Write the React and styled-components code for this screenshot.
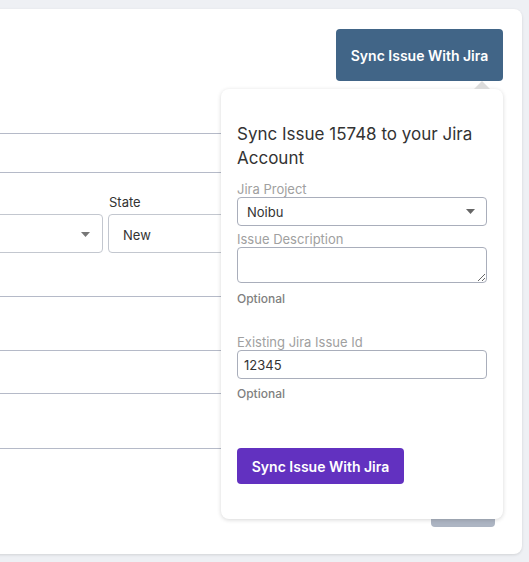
import React from "react";
import styled, { createGlobalStyle } from "styled-components";

const GlobalStyle = createGlobalStyle`
  html, body {
    margin: 0;
    padding: 0;
    background: #eef0f4;
    font-family: Inter, "Noto Sans", "Liberation Sans", sans-serif;
    overflow: hidden;
  }
  * { box-sizing: border-box; }
`;

const Page = styled.div`
  width: 529px;
  height: 562px;
  padding-top: 9px;
`;

const Card = styled.div`
  margin-left: -30px;
  width: 552px;
  height: 545px;
  background: #fff;
  border-radius: 8px;
  box-shadow: 0 1px 3px rgba(0, 0, 0, 0.12);
  display: flex;
  flex-direction: column;
  padding: 20px 19px 27px 0;
`;

const Header = styled.div`
  display: flex;
  justify-content: flex-end;
  height: 52px;
`;

const Anchor = styled.div`
  position: relative;
`;

const Button = styled.button`
  font-family: inherit;
  font-size: 14px;
  font-weight: 600;
  color: #fff;
  border: none;
  border-radius: 4px;
  cursor: pointer;
  background: ${(p) => p.$bg};
  width: ${(p) => p.$w}px;
  height: ${(p) => p.$h}px;
  padding: 0;
`;

const Form = styled.div`
  padding-right: 40px;
  display: flex;
  flex-direction: column;
`;

const Row = styled.div`
  height: ${(p) => p.$h}px;
  border-bottom: 1px solid #b5bac8;
`;

const FieldsRow = styled(Row)`
  display: flex;
  gap: 5px;
  padding-top: 21px;
`;

const Field = styled.div`
  display: flex;
  flex-direction: column;
  gap: 4px;
  width: ${(p) => p.$w}px;
`;

const FieldLabel = styled.div`
  font-size: 13px;
  line-height: 16px;
  color: #333;
  padding-left: 1px;
`;

const Box = styled.div`
  height: 39px;
  border: 1px solid #c3c7cf;
  border-radius: 4px;
  display: flex;
  align-items: center;
  justify-content: space-between;
  padding: 2px 12px 0 14px;
  font-size: 13px;
  color: #333;
`;

const Footer = styled.div`
  margin-top: auto;
  display: flex;
  justify-content: flex-end;
  padding-right: 8px;
`;

const Popover = styled.div`
  position: absolute;
  right: 0;
  top: calc(100% + 8px);
  width: 282px;
  height: 430px;
  background: #fff;
  border-radius: 8px;
  box-shadow: 0 1px 4px rgba(0, 0, 0, 0.16);
  padding: 33px 16px 0 16px;
  z-index: 5;
  &::before {
    content: "";
    position: absolute;
    top: -8px;
    right: 13px;
    border-left: 8px solid transparent;
    border-right: 8px solid transparent;
    border-bottom: 8px solid #dcdcdc;
  }
`;

const Title = styled.h3`
  margin: 0 0 11px;
  font-size: 17px;
  line-height: 24px;
  font-weight: 400;
  color: #333;
`;

const Group = styled.div`
  display: flex;
  flex-direction: column;
  margin-top: ${(p) => p.$mt || 0}px;
`;

const Label = styled.label`
  font-size: 13px;
  line-height: 16px;
  color: #a0a0a0;
`;

const SelectBox = styled.div`
  height: 29px;
  border: 1px solid #a9aebb;
  border-radius: 4px;
  display: flex;
  align-items: center;
  justify-content: space-between;
  padding: 0 11px 0 9px;
  font-size: 13px;
  color: #333;
`;

const TextArea = styled.textarea`
  height: 36px;
  border: 1px solid #a9aebb;
  border-radius: 4px;
  font-family: inherit;
  font-size: 13px;
  padding: 6px;
  outline: none;
  resize: vertical;
`;

const Input = styled.input`
  height: 29px;
  border: 1px solid #a9aebb;
  border-radius: 4px;
  font-family: inherit;
  font-size: 13px;
  color: #333;
  padding: 0 6px;
  outline: none;
`;

const Help = styled.div`
  font-size: 12px;
  line-height: 15px;
  font-weight: 500;
  color: #808080;
  margin-top: ${(p) => p.$mt || 8}px;
`;

const Caret = ({ color = "#666" }) => (
  <svg width="9" height="5" viewBox="0 0 9 5">
    <path d="M0 0h9L4.5 5z" fill={color} />
  </svg>
);

export default function App() {
  return (
    <Page>
      <GlobalStyle />
      <Card>
        <Header>
          <Anchor>
            <Button $bg="#416587" $w={167} $h={52}>
              Sync Issue With Jira
            </Button>
            <Popover>
              <Title>Sync Issue 15748 to your Jira Account</Title>
              <Group>
                <Label>Jira Project</Label>
                <SelectBox>
                  Noibu
                  <Caret />
                </SelectBox>
              </Group>
              <Group $mt={5}>
                <Label>Issue Description</Label>
                <TextArea />
                <Help>Optional</Help>
              </Group>
              <Group $mt={28}>
                <Label>Existing Jira Issue Id</Label>
                <Input defaultValue="12345" />
                <Help $mt={7}>Optional</Help>
              </Group>
              <Group $mt={47}>
                <Button $bg="#6231c0" $w={167} $h={36}>
                  Sync Issue With Jira
                </Button>
              </Group>
            </Popover>
          </Anchor>
        </Header>
        <Form>
          <Row $h={53} />
          <Row $h={39} />
          <FieldsRow $h={124}>
            <Field $w={133}>
              <FieldLabel>&nbsp;</FieldLabel>
              <Box>
                <span />
                <Caret color="#777" />
              </Box>
            </Field>
            <Field $w={200}>
              <FieldLabel>State</FieldLabel>
              <Box>New</Box>
            </Field>
          </FieldsRow>
          <Row $h={54} />
          <Row $h={43} />
          <Row $h={55} />
        </Form>
        <Footer>
          <Button $bg="#adb5c3" $w={64} $h={36}>
            Save
          </Button>
        </Footer>
      </Card>
    </Page>
  );
}
